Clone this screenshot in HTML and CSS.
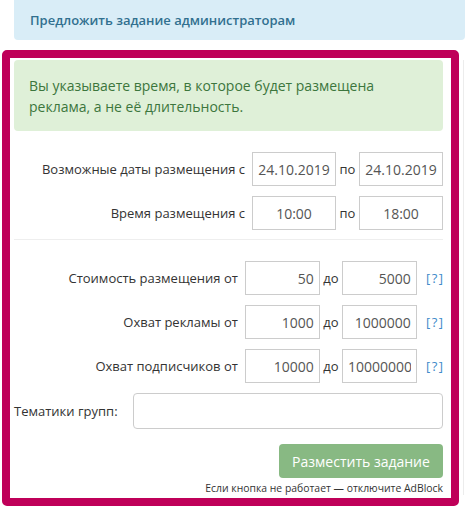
FILE: index.html
```html
<!DOCTYPE html>
<html lang="ru">
<head>
<meta charset="utf-8">
<link rel="stylesheet" href="styles.css">
</head>
<body>
<div class="header">Предложить задание администраторам</div>
<div class="frame">
  <div class="alert">Вы указываете время, в которое будет размещена реклама, а не её длительность.</div>
  <div class="rows">
    <div class="row">
      <span class="label">Возможные даты размещения с</span>
      <input class="inp wide center" value="24.10.2019">
      <span class="sep w24">по</span>
      <input class="inp wide center" value="24.10.2019">
    </div>
    <div class="row">
      <span class="label">Время размещения с</span>
      <input class="inp wide center" value="10:00">
      <span class="sep w24">по</span>
      <input class="inp wide center" value="18:00">
    </div>
  </div>
  <div class="divider"></div>
  <div class="rows">
    <div class="row">
      <span class="label">Стоимость размещения от</span>
      <input class="inp narrow right" value="50">
      <span class="sep w22">до</span>
      <input class="inp narrow right" value="5000">
      <a class="help">[?]</a>
    </div>
    <div class="row">
      <span class="label">Охват рекламы от</span>
      <input class="inp narrow right" value="1000">
      <span class="sep w22">до</span>
      <input class="inp narrow right" value="1000000">
      <a class="help">[?]</a>
    </div>
    <div class="row">
      <span class="label">Охват подписчиков от</span>
      <input class="inp narrow right" value="10000">
      <span class="sep w22">до</span>
      <input class="inp narrow right" value="10000000">
      <a class="help">[?]</a>
    </div>
  </div>
  <div class="topics">
    <span class="topics-label">Тематики групп:</span>
    <input class="topics-input">
  </div>
  <div class="actions">
    <button class="btn">Разместить задание</button>
    <div class="note">Если кнопка не работает — отключите AdBlock</div>
  </div>
</div>
</body>
</html>
```
FILE: styles.css
```css
html, body {
  margin: 0;
  padding: 0;
  background: #fff;
}
body {
  font-family: "Open Sans", "Noto Sans", sans-serif;
  font-size: 13px;
  color: #333;
  position: relative;
  width: 470px;
  height: 507px;
  overflow: hidden;
}
body::after {
  content: "";
  position: absolute;
  left: 463px;
  top: 60px;
  width: 1px;
  height: 435px;
  background: #ececec;
}
.header {
  margin: -10px 5px 0 14px;
  height: 50px;
  box-sizing: border-box;
  padding: 10px 16px 0;
  display: flex;
  align-items: center;
  background: #d9edf7;
  color: #31708f;
  font-weight: 600;
  font-size: 13px;
  border-radius: 4px;
}
.frame {
  margin: 10px 0 0 2px;
  width: 457px;
  height: 456px;
  box-sizing: border-box;
  border: 8px solid #bf0059;
  border-radius: 5px;
  padding: 2px 8px 0 4px;
  background: #fff;
}
.alert {
  background: #dff0d8;
  color: #3c763d;
  border-radius: 4px;
  padding: 15px 15px 14px;
  line-height: 21px;
  font-size: 14px;
}
.rows {
  display: flex;
  flex-direction: column;
  gap: 10px;
  margin-top: 21px;
}
.row {
  display: flex;
  justify-content: flex-end;
  align-items: center;
  height: 34px;
}
.label {
  margin-right: 7px;
}
.inp {
  box-sizing: border-box;
  height: 34px;
  border: 1px solid #ccc;
  border-radius: 0;
  padding: 0 5px;
  font-family: inherit;
  font-size: 14px;
  color: #555;
  background: #fff;
  margin: 0;
}
.wide { width: 84px; }
.narrow { width: 75px; }
.center { text-align: center; }
.right { text-align: right; }
.sep {
  text-align: center;
}
.w24 { width: 23px; }
.w22 { width: 22px; }
.help {
  margin-left: 9px;
  color: #428bca;
  letter-spacing: 1.5px;
  margin-right: -1.5px;
  font-size: 13px;
}
.divider {
  height: 1px;
  background: #eee;
  margin-top: 9px;
}
.topics {
  display: flex;
  align-items: center;
  margin-top: 10px;
}
.topics-label {
  width: 119px;
  flex: none;
}
.topics-input {
  flex: 1;
  height: 36px;
  box-sizing: border-box;
  border: 1px solid #ccc;
  border-radius: 4px;
  margin: 0;
}
.actions {
  display: flex;
  flex-direction: column;
  align-items: flex-end;
  margin-top: 15px;
}
.btn {
  width: 164px;
  height: 34px;
  border: none;
  border-radius: 4px;
  background: #88b983;
  color: #fff;
  font-family: inherit;
  font-size: 14px;
  padding: 0;
}
.note {
  margin-top: 3px;
  font-size: 10.4px;
  line-height: 14px;
  color: #333;
}
```
